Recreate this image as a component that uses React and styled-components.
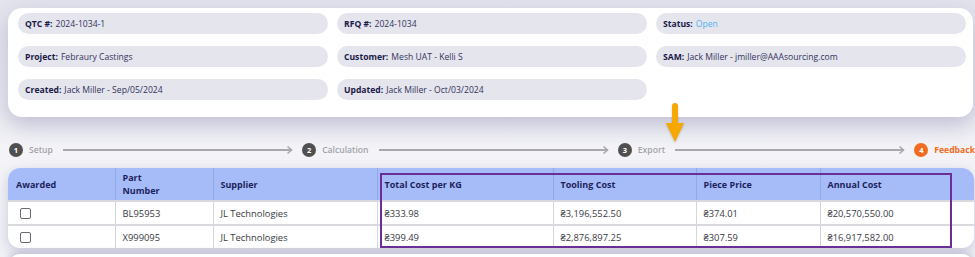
import React from 'react';
import styled, { createGlobalStyle } from 'styled-components';

const GlobalStyle = createGlobalStyle`
  html, body {
    margin: 0;
    padding: 0;
    background: #f3f3f7;
    font-family: "Open Sans", "Liberation Sans", sans-serif;
    overflow: hidden;
  }
`;

const Page = styled.div`
  position: relative;
  width: 975px;
  height: 257px;
  box-sizing: border-box;
  padding: 8px 2px 0 8px;
  overflow: hidden;
  background: linear-gradient(#e4e4ee 0px, #eaeaf1 110px, #f4f4f8 150px, #f1f1f6 257px);
`;

const InfoCard = styled.div`
  background: #fff;
  border-radius: 14px;
  box-shadow: 0 8px 22px rgba(95, 95, 150, 0.32);
  padding: 5px 8px 17px 10px;
  display: grid;
  grid-template-columns: 310px 310px 310px;
  column-gap: 9px;
  row-gap: 12px;
`;

const Pill = styled.div`
  height: 21px;
  border-radius: 11px;
  background: #e5e5ee;
  display: flex;
  align-items: center;
  padding-left: 7px;
  font-size: 8.6px;
  color: #2e2e55;
  white-space: nowrap;
`;

const PillLabel = styled.span`
  font-weight: 700;
  color: #1a1a48;
  margin-right: 3px;
`;

const PillValue = styled.span`
  color: ${p => p.$tone || '#33335a'};
`;

const Steps = styled.div`
  display: flex;
  align-items: center;
  width: 966px;
  margin: 26px 0 0 1px;
  height: 14px;
`;

const Step = styled.div`
  display: flex;
  align-items: center;
  gap: 6px;
  flex-shrink: 0;
`;

const StepDot = styled.span`
  width: 14px;
  height: 14px;
  border-radius: 50%;
  background: ${p => (p.$active ? '#f26c21' : '#505050')};
  color: #fff;
  font-size: 7.5px;
  font-weight: 700;
  display: flex;
  align-items: center;
  justify-content: center;
`;

const StepLabel = styled.span`
  font-size: 8.6px;
  font-weight: ${p => (p.$active ? 700 : 600)};
  color: ${p => (p.$active ? '#f26c21' : '#a2a2a8')};
`;

const Connector = styled.div`
  flex: 1;
  display: flex;
  align-items: center;
  margin: 0 9px 0 10px;
`;

const ConnectorLine = styled.div`
  flex: 1;
  height: 2px;
  background: #a8a8ae;
`;

const TableCard = styled.div`
  margin-top: 11px;
  background: #fff;
  border-radius: 12px;
  box-shadow: 0 4px 14px rgba(95, 95, 150, 0.28);
  overflow: hidden;
  width: 966px;
`;

const Table = styled.table`
  width: 100%;
  border-collapse: collapse;
  table-layout: fixed;
  font-size: 9.4px;
`;

const HeadCell = styled.th`
  background: #a6bcf8;
  color: #1c1f5c;
  font-weight: 700;
  font-size: 9px;
  text-align: left;
  vertical-align: middle;
  height: 32px;
  padding: 0 7px;
  line-height: 13px;
  border-left: 1px solid #93a8e2;
  &:first-child { border-left: none; padding-left: 8px; }
`;

const Cell = styled.td`
  color: #3a3a44;
  height: 22px;
  padding: 0 7px;
  border-left: 1px solid #d6d6da;
  border-top: 2px solid #d9d9de;
  &:first-child { border-left: none; padding-left: 12px; }
`;

const Check = styled.span`
  display: block;
  width: 9px;
  height: 9px;
  border: 1.5px solid #6a6a70;
  border-radius: 2px;
  background: #fff;
`;

const NextPanel = styled.div`
  margin-top: 6px;
  height: 20px;
  background: #fff;
  border-radius: 12px 12px 0 0;
  box-shadow: 0 -2px 6px rgba(95, 95, 150, 0.25);
  width: 966px;
`;

const Highlight = styled.div`
  position: absolute;
  left: 380px;
  top: 173px;
  width: 568px;
  height: 71px;
  border: 2px solid #6b2d96;
  pointer-events: none;
`;

const ArrowMark = styled.svg`
  position: absolute;
  left: 665px;
  top: 101px;
  filter: drop-shadow(0 1px 1px rgba(0, 0, 0, 0.2));
`;

const info = [
  ['QTC #:', '2024-1034-1'],
  ['RFQ #:', '2024-1034'],
  ['Status:', 'Open', '#4fb2f2'],
  ['Project:', 'Febraury Castings'],
  ['Customer:', 'Mesh UAT - Kelli S'],
  ['SAM:', 'Jack Miller - jmiller@AAAsourcing.com'],
  ['Created:', 'Jack Miller - Sep/05/2024'],
  ['Updated:', 'Jack Miller - Oct/03/2024'],
];

const steps = ['Setup', 'Calculation', 'Export', 'Feedback'];

const columns = [
  ['Awarded', 107],
  ['Part Number', 98],
  ['Supplier', 164],
  ['Total Cost per KG', 176],
  ['Tooling Cost', 143],
  ['Piece Price', 124],
  ['Annual Cost', 154],
];

const rows = [
  ['BL95953', 'JL Technologies', '₴333.98', '₴3,196,552.50', '₴374.01', '₴20,570,550.00'],
  ['X999095', 'JL Technologies', '₴399.49', '₴2,876,897.25', '₴307.59', '₴16,917,582.00'],
];

const Chevron = () => (
  <svg width="7" height="10" viewBox="0 0 7 10" style={{ marginLeft: -6 }}>
    <path d="M1.5 1.5 L5.5 5 L1.5 8.5" fill="none" stroke="#a8a8ae" strokeWidth="1.6" />
  </svg>
);

export default function App() {
  return (
    <Page>
      <GlobalStyle />
      <InfoCard>
        {info.map(([label, value, tone]) => (
          <Pill key={label}>
            <PillLabel>{label}</PillLabel>
            <PillValue $tone={tone}>{value}</PillValue>
          </Pill>
        ))}
      </InfoCard>

      <Steps>
        {steps.map((s, i) => (
          <React.Fragment key={s}>
            <Step>
              <StepDot $active={i === 3}>{i + 1}</StepDot>
              <StepLabel $active={i === 3}>{s}</StepLabel>
            </Step>
            {i < 3 && (
              <Connector>
                <ConnectorLine />
                <Chevron />
              </Connector>
            )}
          </React.Fragment>
        ))}
      </Steps>

      <TableCard>
        <Table>
          <colgroup>
            {columns.map(([c, w]) => (
              <col key={c} style={{ width: w }} />
            ))}
          </colgroup>
          <thead>
            <tr>
              {columns.map(([c]) => (
                <HeadCell key={c}>
                  {c === 'Part Number' ? (
                    <>
                      Part
                      <br />
                      Number
                    </>
                  ) : (
                    c
                  )}
                </HeadCell>
              ))}
            </tr>
          </thead>
          <tbody>
            {rows.map(r => (
              <tr key={r[0]}>
                <Cell>
                  <Check />
                </Cell>
                {r.map((v, j) => (
                  <Cell key={j}>{v}</Cell>
                ))}
              </tr>
            ))}
          </tbody>
        </Table>
      </TableCard>
      <NextPanel />

      <Highlight />
      <ArrowMark width="22" height="44" viewBox="0 0 22 44">
        <rect x="7" y="2" width="6" height="24" rx="3" fill="#f6a800" />
        <path d="M1 22 L19 22 L10 41 Z" fill="#f6a800" />
      </ArrowMark>
    </Page>
  );
}
